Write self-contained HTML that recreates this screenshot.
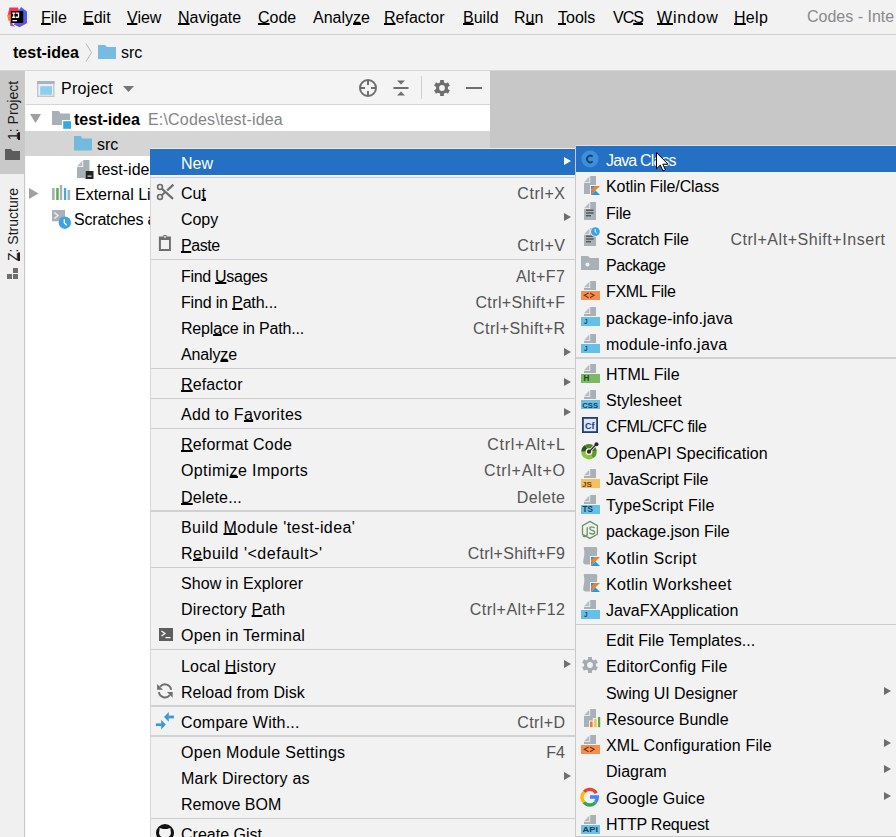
<!DOCTYPE html>
<html><head><meta charset="utf-8">
<style>
*{margin:0;padding:0;box-sizing:border-box}
html,body{width:896px;height:837px;overflow:hidden;background:#f2f2f2;font-family:"Liberation Sans",sans-serif;font-size:16px;color:#000}
.a{position:absolute;white-space:nowrap;line-height:18px}
svg.a{overflow:visible}
.t{position:absolute;white-space:nowrap;height:26px;line-height:26px}
u{text-decoration:underline;text-decoration-thickness:1.6px;text-underline-offset:0.3px;text-decoration-skip-ink:none}
.vt{transform-origin:0 0;transform:rotate(-90deg);font-size:14px;color:#1a1a1a}
.arr{position:absolute;width:0;height:0;border-top:4.7px solid transparent;border-bottom:4.7px solid transparent;border-left:7.4px solid #6e6e6e}
.hl{position:absolute;background:#2470c4}
</style></head><body>
<div class="a" style="left:0;top:34px;width:896px;height:1px;background:#cfcfcf"></div>
<div class="a" style="left:0;top:70px;width:896px;height:1px;background:#d6d6d6"></div>
<div class="a" style="left:0;top:71px;width:25px;height:766px;background:#f0f0f0"></div><div class="a" style="left:25px;top:71px;width:1px;height:766px;background:#f7f7f7"></div>
<div class="a" style="left:24px;top:174px;width:1px;height:663px;background:#c8c8c8"></div>
<div class="a" style="left:26px;top:71px;width:464px;height:766px;background:#fff"></div>
<div class="a" style="left:26px;top:71px;width:464px;height:33px;background:#f4f4f4"></div>
<div class="a" style="left:26px;top:104px;width:464px;height:1px;background:#d6d6d6"></div>
<div class="a" style="left:490px;top:71px;width:406px;height:766px;background:#c7c7c7"></div>
<svg class="a" style="left:6px;top:6px" width="22" height="22" viewBox="0 0 22 22">
<path d="M3.5 1.5H12L13.5 6L6 18L1.5 10Z" fill="#fe2e5c"/>
<path d="M1.5 9L5 8L5 15L2 14.5Z" fill="#f98520"/>
<path d="M15 1L21 5.5V17L13.5 21L8 18.5L12.5 5Z" fill="#4460f0"/>
<path d="M8 18.5L13.5 21L21 17V12Z" fill="#6b4fe6"/>
<path d="M3.5 15L9 20.5L4.5 20Z" fill="#b03fd0"/>
<rect x="4.8" y="5" width="12.4" height="12" fill="#000"/>
<path d="M6.2 6.5H9.4V7.8H8.4V10.6H9.4V11.9H6.2V10.6H7.2V7.8H6.2ZM10 6.5H13.2V10.4Q13.2 11.9 11.6 11.9H10V10.6H11.9V7.8H10Z" fill="#fff"/>
<rect x="6.5" y="14" width="4.5" height="1.3" fill="#fff"/>
</svg><div class="a mb" style="left:41px;top:9px;letter-spacing:0px"><u>F</u>ile</div><div class="a mb" style="left:83px;top:9px;letter-spacing:0px"><u>E</u>dit</div><div class="a mb" style="left:127px;top:9px;letter-spacing:0px"><u>V</u>iew</div><div class="a mb" style="left:178px;top:9px;letter-spacing:0px"><u>N</u>avigate</div><div class="a mb" style="left:258px;top:9px;letter-spacing:0px"><u>C</u>ode</div><div class="a mb" style="left:313px;top:9px;letter-spacing:0px">Analy<u>z</u>e</div><div class="a mb" style="left:384px;top:9px;letter-spacing:0px"><u>R</u>efactor</div><div class="a mb" style="left:463px;top:9px;letter-spacing:0px"><u>B</u>uild</div><div class="a mb" style="left:514px;top:9px;letter-spacing:0px">R<u>u</u>n</div><div class="a mb" style="left:558px;top:9px;letter-spacing:0px"><u>T</u>ools</div><div class="a mb" style="left:613px;top:9px;letter-spacing:-1.0px">VC<u>S</u></div><div class="a mb" style="left:657px;top:9px;letter-spacing:0.8px"><u>W</u>indow</div><div class="a mb" style="left:734px;top:9px;letter-spacing:0.3px"><u>H</u>elp</div><div class="a mb" style="left:807px;top:8px;color:#8a8a8a">Codes - Inte</div><div class="a" style="left:13px;top:44px;font-weight:bold;font-size:16px">test-idea</div><svg class="a" style="left:85px;top:43px" width="8" height="19" viewBox="0 0 8 19"><path d="M1 0.5L6.5 9.5L1 18.5" fill="none" stroke="#b5b5b5" stroke-width="1"/></svg><svg class="a" style="left:98px;top:45px" width="18" height="14" viewBox="0 0 18 14"><path d="M0 0H7L9 2H18V14H0Z" fill="#77bbe3"/></svg><div class="a" style="left:121px;top:44px">src</div><div class="a" style="left:0;top:71px;width:25px;height:103px;background:#c9c9c9"></div><div class="a vt" style="left:3.5px;top:139.5px"><u>1</u>: Project</div><svg class="a" style="left:5px;top:149px" width="15" height="11" viewBox="0 0 15 11"><path d="M0 0H6L7.5 2H15V11H0Z" fill="#5c5c5c"/></svg><div class="a vt" style="left:3.5px;top:260.5px"><u>Z</u>: Structure</div><svg class="a" style="left:6px;top:268px" width="13" height="12" viewBox="0 0 13 12"><rect x="7" y="0" width="5" height="5" fill="#6e6e6e"/><rect x="1" y="6" width="5" height="5" fill="#6e6e6e"/><rect x="7" y="6" width="5" height="5" fill="#6e6e6e"/></svg><svg class="a" style="left:37px;top:80.5px" width="18" height="16" viewBox="0 0 18 16"><rect x="0" y="0" width="17.5" height="16" fill="#c3c6c9"/><rect x="0" y="0" width="17.5" height="3" fill="#aeb3b9"/><rect x="1.4" y="3" width="14.7" height="11.6" fill="#e4f2fb"/><rect x="3.2" y="5.2" width="11.8" height="8.6" fill="#8fcdee"/></svg><div class="a" style="left:61px;top:80px;letter-spacing:0.3px">Project</div><svg class="a" style="left:123px;top:86px" width="11" height="6" viewBox="0 0 11 6"><path d="M0 0H11L5.5 6Z" fill="#757575"/></svg><svg class="a" style="left:358px;top:78px" width="20" height="20" viewBox="0 0 20 20"><circle cx="10" cy="10" r="8" fill="none" stroke="#6e6e6e" stroke-width="2"/><path d="M10 2V7M10 13V18M2 10H7M13 10H18" stroke="#6e6e6e" stroke-width="2"/></svg><svg class="a" style="left:393px;top:80px" width="16" height="16" viewBox="0 0 16 16"><path d="M4 0.5H12L8 4.5Z" fill="#6e6e6e"/><rect x="0.5" y="7" width="15" height="2" fill="#6e6e6e"/><path d="M4 15.5H12L8 11.5Z" fill="#6e6e6e"/></svg><div class="a" style="left:421px;top:76px;width:1px;height:23px;background:#cfcfcf"></div><svg class="a" style="left:434px;top:80px" width="16" height="16" viewBox="0 0 16 16"><g fill="#6e6e6e"><circle cx="8" cy="8" r="6"/><rect x="6.1" y="0" width="3.8" height="16"/><rect x="6.1" y="0" width="3.8" height="16" transform="rotate(60 8 8)"/><rect x="6.1" y="0" width="3.8" height="16" transform="rotate(-60 8 8)"/></g><circle cx="8" cy="8" r="2.9" fill="#f2f2f2"/></svg><div class="a" style="left:466px;top:87px;width:16px;height:2px;background:#6e6e6e"></div><div class="a" style="left:25px;top:131px;width:465px;height:25px;background:#d5d5d5"></div><svg class="a" style="left:30px;top:114px" width="11" height="9" viewBox="0 0 11 9"><path d="M0 0H11L5.5 9Z" fill="#a0a0a0"/></svg><svg class="a" style="left:52px;top:111px" width="20" height="18" viewBox="0 0 20 18"><path d="M0 0H7L8.5 2.5H18V9H10V14H0Z" fill="#a9b1b8"/><rect x="11.2" y="10.2" width="7.8" height="7.6" fill="#36a9e1"/></svg><div class="a" style="left:74px;top:110.5px;font-weight:bold">test-idea</div><div class="a" style="left:148px;top:110.5px;color:#858585;letter-spacing:0.18px">E:\Codes\test-idea</div><svg class="a" style="left:74px;top:136px" width="18" height="15" viewBox="0 0 18 15"><path d="M0 0H7L8 2.5H18V14.5H0Z" fill="#74b9de"/></svg><div class="a" style="left:97px;top:135.5px">src</div><svg class="a" style="left:77px;top:160px" width="17" height="19" viewBox="0 0 17 19"><path d="M6.2 0H12.5V11H8V18H0V7H6.2Z" fill="#a9b1b8"/><path d="M0 6.2L5.4 0.4V6.2Z" fill="#b8bdc2"/><rect x="8.5" y="11" width="8" height="8" fill="#232323"/><rect x="10.5" y="15.5" width="4" height="1.3" fill="#ccc"/></svg><div class="a" style="left:97px;top:160.5px">test-idea.iml</div><svg class="a" style="left:29px;top:188px" width="10" height="11" viewBox="0 0 10 11"><path d="M0 0V11L9.5 5.5Z" fill="#a0a0a0"/></svg><svg class="a" style="left:52px;top:185px" width="19" height="15" viewBox="0 0 19 15"><rect x="0" y="3" width="2.7" height="12" fill="#a9b1b8"/><rect x="4.2" y="3" width="2.5" height="12" fill="#5fac49"/><rect x="7.8" y="0" width="2.4" height="15" fill="#a9b1b8"/><rect x="11.9" y="3" width="2.3" height="12" fill="#45a7df"/><rect x="15.5" y="5" width="2.7" height="10" fill="#a9b1b8"/></svg><div class="a" style="left:75px;top:185.5px">External Libraries</div><svg class="a" style="left:52px;top:210px" width="20" height="19" viewBox="0 0 20 19"><rect x="0" y="0" width="13" height="11.3" fill="#a9b1b8"/><path d="M2.3 2.5L6 5.5L2.3 8.5" fill="none" stroke="#f2f2f2" stroke-width="1.3"/><circle cx="12.8" cy="12.7" r="6.2" fill="#3ea3e0"/><path d="M12.3 9.2V12.8L14.6 15.2" fill="none" stroke="#fff" stroke-width="1.3"/></svg><div class="a" style="left:74px;top:210.5px;letter-spacing:-0.2px">Scratches and Consoles</div>
<div class="a" style="left:150px;top:148px;width:426px;height:700px;background:#f2f2f2;border-left:1px solid #d6d6d6;border-top:1px solid #ececec"></div>
<div class="hl" style="left:150px;top:149px;width:425px;height:26px"></div><div class="t" style="left:181px;top:150.5px;color:#fff">New</div><div class="arr" style="left:564px;top:156.8px;border-left-color:#fff"></div><div class="a" style="left:151px;top:175px;width:424px;height:1px;background:#fafafa"></div><div class="t" style="left:181px;top:180.5px;">Cu<u>t</u></div><div class="t" style="right:331px;top:180.5px;letter-spacing:0.560px;margin-right:-0.560px;color:#555">Ctrl+X</div><div class="t" style="left:181px;top:206.5px;letter-spacing:-0.067px;">Copy</div><div class="arr" style="left:564px;top:212.8px;border-left-color:#6e6e6e"></div><div class="t" style="left:181px;top:232.5px;letter-spacing:-0.450px;"><u>P</u>aste</div><div class="t" style="right:331px;top:232.5px;letter-spacing:0.560px;margin-right:-0.560px;color:#555">Ctrl+V</div><div class="t" style="left:181px;top:263.5px;letter-spacing:-0.300px;">Find <u>U</u>sages</div><div class="t" style="right:331px;top:263.5px;letter-spacing:0.480px;margin-right:-0.480px;color:#555">Alt+F7</div><div class="t" style="left:181px;top:289.5px;letter-spacing:-0.171px;">Find in <u>P</u>ath...</div><div class="t" style="right:331px;top:289.5px;letter-spacing:0.382px;margin-right:-0.382px;color:#555">Ctrl+Shift+F</div><div class="t" style="left:181px;top:315.5px;letter-spacing:-0.188px;">Repl<u>a</u>ce in Path...</div><div class="t" style="right:331px;top:315.5px;letter-spacing:0.436px;margin-right:-0.436px;color:#555">Ctrl+Shift+R</div><div class="t" style="left:181px;top:341.5px;letter-spacing:-0.133px;">Analy<u>z</u>e</div><div class="arr" style="left:564px;top:347.8px;border-left-color:#6e6e6e"></div><div class="t" style="left:181px;top:371.5px;letter-spacing:0.143px;"><u>R</u>efactor</div><div class="arr" style="left:564px;top:377.8px;border-left-color:#6e6e6e"></div><div class="t" style="left:181px;top:401.5px;letter-spacing:0.307px;">Add to F<u>a</u>vorites</div><div class="arr" style="left:564px;top:407.8px;border-left-color:#6e6e6e"></div><div class="t" style="left:181px;top:431.5px;letter-spacing:0.200px;"><u>R</u>eformat Code</div><div class="t" style="right:331px;top:431.5px;letter-spacing:0.733px;margin-right:-0.733px;color:#555">Ctrl+Alt+L</div><div class="t" style="left:181px;top:457.5px;letter-spacing:0.387px;">Optimi<u>z</u>e Imports</div><div class="t" style="right:331px;top:457.5px;letter-spacing:0.711px;margin-right:-0.711px;color:#555">Ctrl+Alt+O</div><div class="t" style="left:181px;top:484.5px;letter-spacing:0.150px;"><u>D</u>elete...</div><div class="t" style="right:331px;top:484.5px;letter-spacing:0.400px;margin-right:-0.400px;color:#555">Delete</div><div class="t" style="left:181px;top:514.5px;letter-spacing:0.409px;">Build <u>M</u>odule 'test-idea'</div><div class="t" style="left:181px;top:540.5px;letter-spacing:0.522px;">R<u>e</u>build '&lt;default&gt;'</div><div class="t" style="right:331px;top:540.5px;letter-spacing:0.250px;margin-right:-0.250px;color:#555">Ctrl+Shift+F9</div><div class="t" style="left:181px;top:570.5px;letter-spacing:0.080px;">Show in Explorer</div><div class="t" style="left:181px;top:596.5px;letter-spacing:0.215px;">Directory <u>P</u>ath</div><div class="t" style="right:331px;top:596.5px;letter-spacing:0.491px;margin-right:-0.491px;color:#555">Ctrl+Alt+F12</div><div class="t" style="left:181px;top:622.5px;letter-spacing:0.213px;">Open in Terminal</div><div class="t" style="left:181px;top:653.5px;letter-spacing:0.183px;">Local <u>H</u>istory</div><div class="arr" style="left:564px;top:659.8px;border-left-color:#6e6e6e"></div><div class="t" style="left:181px;top:679.5px;letter-spacing:0.067px;">Reload from Disk</div><div class="t" style="left:181px;top:709.5px;letter-spacing:0.200px;">Compare With...</div><div class="t" style="right:331px;top:709.5px;letter-spacing:0.400px;margin-right:-0.400px;color:#555">Ctrl+D</div><div class="t" style="left:181px;top:739.5px;letter-spacing:0.305px;">Open Module Settings</div><div class="t" style="right:331px;top:739.5px;color:#555">F4</div><div class="t" style="left:181px;top:765.5px;letter-spacing:0.200px;">Mark Directory as</div><div class="arr" style="left:564px;top:771.8px;border-left-color:#6e6e6e"></div><div class="t" style="left:181px;top:791.5px;letter-spacing:-0.022px;">Remove BOM</div><div class="t" style="left:181px;top:821.5px;">Create Gist...</div><div class="a" style="left:151px;top:177px;width:424px;height:1px;background:#cdcdcd"></div><div class="a" style="left:151px;top:259px;width:424px;height:1px;background:#cdcdcd"></div><div class="a" style="left:151px;top:368px;width:424px;height:1px;background:#cdcdcd"></div><div class="a" style="left:151px;top:398px;width:424px;height:1px;background:#cdcdcd"></div><div class="a" style="left:151px;top:428px;width:424px;height:1px;background:#cdcdcd"></div><div class="a" style="left:151px;top:510px;width:424px;height:2px;background:#d1d1d1"></div><div class="a" style="left:151px;top:567px;width:424px;height:1px;background:#cdcdcd"></div><div class="a" style="left:151px;top:649px;width:424px;height:1px;background:#cdcdcd"></div><div class="a" style="left:151px;top:705px;width:424px;height:2px;background:#d1d1d1"></div><div class="a" style="left:151px;top:735px;width:424px;height:2px;background:#d1d1d1"></div><div class="a" style="left:151px;top:818px;width:424px;height:1px;background:#cdcdcd"></div><svg class="a" style="left:154px;top:180px" width="24" height="24" viewBox="0 0 24 24"><g fill="none" stroke="#6e6e6e"><circle cx="6" cy="6.9" r="2.4" stroke-width="1.7"/><circle cx="6" cy="16.9" r="2.4" stroke-width="1.7"/><path d="M7.7 8.5L19 18.9" stroke-width="2.2"/><path d="M7.8 15.3L11.3 12.1" stroke-width="2"/><path d="M13.1 10.5L19.4 4.6" stroke-width="2.2"/></g></svg><svg class="a" style="left:154px;top:230px" width="24" height="24" viewBox="0 0 24 24"><path d="M4.9 6.4H16.9V21H4.9ZM6.9 9.9V18.9H15V9.9Z" fill="#6e6e6e" fill-rule="evenodd"/><path d="M8.6 6.6Q8.8 5.1 10.4 5.1H11.6Q13.2 5.1 13.4 6.6Z" fill="#6e6e6e"/><circle cx="11" cy="6.9" r="0.9" fill="#f2f2f2"/></svg><svg class="a" style="left:159px;top:628px" width="14" height="13" viewBox="0 0 14 13"><rect width="14" height="13" fill="#5e5e5e"/><path d="M2.5 3L6 5.5L2.5 8" fill="none" stroke="#fff" stroke-width="1.2"/><rect x="6.5" y="9" width="5" height="1.2" fill="#fff"/></svg><svg class="a" style="left:155px;top:681px" width="20" height="20" viewBox="0 0 20 20"><g fill="none" stroke="#6e6e6e" stroke-width="2"><path d="M16.1 8.8A6.2 6.2 0 0 0 5.2 5.6"/><path d="M3.9 11.2A6.2 6.2 0 0 0 14.8 14.2"/></g><g fill="#6e6e6e"><path d="M2.1 2.9V8.8H8Z"/><path d="M17.7 11.1V16.7L11.9 11.1Z"/></g></svg><svg class="a" style="left:155px;top:711px" width="19" height="19" viewBox="0 0 19 19"><g fill="#3a97d8"><path d="M9 6L13.8 0.9V10.8Z"/><rect x="13.6" y="4.6" width="5.3" height="2.8"/><path d="M10.8 13.6L6.2 9V18.6Z"/><rect x="0.9" y="12.4" width="5.5" height="2.7"/></g></svg><svg class="a" style="left:156px;top:824px" width="18" height="18" viewBox="0 0 18 18"><circle cx="9" cy="9" r="9" fill="#111"/><path d="M3.4 6.8L3.6 3.9Q5.6 4.3 6.9 5.1H11.1Q12.4 4.3 14.4 3.9L14.6 6.8Q15.2 8.2 14.8 10Q14 13.6 9 13.6Q4 13.6 3.2 10Q2.8 8.2 3.4 6.8Z" fill="#f2f2f2"/><rect x="7.3" y="13" width="3.4" height="5" fill="#111"/></svg>
<div class="a" style="left:575px;top:145px;width:321px;height:692px;background:#f2f2f2;border-left:1px solid #c9c9c9;border-top:1px solid #e0e0e0;border-bottom:1px solid #c9c9c9"></div>
<div class="hl" style="left:576px;top:146px;width:320px;height:26px"></div><div class="t" style="left:606px;top:147.5px;color:#fff;letter-spacing:-0.85px">Java Class</div><svg class="a" style="left:581px;top:150px" width="18" height="18" viewBox="0 0 18 18"><circle cx="9" cy="9" r="8.5" fill="#3d90d8"/><path d="M11.6 6.6A3.3 3.3 0 1 0 11.6 11.4" fill="none" stroke="#15406f" stroke-width="1.8"/></svg><div class="t" style="left:606px;top:173.5px;letter-spacing:-0.088px;">Kotlin File/Class</div><div class="t" style="left:606px;top:200.5px;letter-spacing:-0.200px;">File</div><div class="t" style="left:606px;top:226.5px;letter-spacing:-0.145px;">Scratch File</div><div class="t" style="right:11px;top:226.5px;letter-spacing:0.550px;margin-right:-0.550px;color:#555">Ctrl+Alt+Shift+Insert</div><div class="t" style="left:606px;top:252.5px;letter-spacing:-0.400px;">Package</div><div class="t" style="left:606px;top:278.5px;letter-spacing:-0.300px;">FXML File</div><div class="t" style="left:606px;top:305.5px;letter-spacing:0.075px;">package-info.java</div><div class="t" style="left:606px;top:331.5px;letter-spacing:0.253px;">module-info.java</div><div class="t" style="left:606px;top:361.5px;letter-spacing:0.050px;">HTML File</div><div class="t" style="left:606px;top:387.5px;letter-spacing:0.111px;">Stylesheet</div><div class="t" style="left:606px;top:413.5px;letter-spacing:-0.417px;">CFML/CFC file</div><div class="t" style="left:606px;top:440.5px;letter-spacing:0.080px;">OpenAPI Specification</div><div class="t" style="left:606px;top:466.5px;letter-spacing:-0.186px;">JavaScript File</div><div class="t" style="left:606px;top:492.5px;letter-spacing:0.186px;">TypeScript File</div><div class="t" style="left:606px;top:518.5px;letter-spacing:-0.062px;">package.json File</div><div class="t" style="left:606px;top:545.5px;letter-spacing:0.417px;">Kotlin Script</div><div class="t" style="left:606px;top:571.5px;letter-spacing:0.320px;">Kotlin Worksheet</div><div class="t" style="left:606px;top:597.5px;letter-spacing:-0.012px;">JavaFXApplication</div><div class="t" style="left:606px;top:627.5px;letter-spacing:0.048px;">Edit File Templates...</div><div class="t" style="left:606px;top:653.5px;letter-spacing:0.200px;">EditorConfig File</div><div class="t" style="left:606px;top:680.5px;letter-spacing:-0.050px;">Swing UI Designer</div><div class="arr" style="left:884px;top:686.8px;border-left-color:#6e6e6e"></div><div class="t" style="left:606px;top:706.5px;letter-spacing:-0.014px;">Resource Bundle</div><div class="t" style="left:606px;top:732.5px;letter-spacing:0.171px;">XML Configuration File</div><div class="arr" style="left:884px;top:738.8px;border-left-color:#6e6e6e"></div><div class="t" style="left:606px;top:758.5px;letter-spacing:0.033px;">Diagram</div><div class="arr" style="left:884px;top:764.8px;border-left-color:#6e6e6e"></div><div class="t" style="left:606px;top:785.5px;letter-spacing:0.091px;">Google Guice</div><div class="arr" style="left:884px;top:791.8px;border-left-color:#6e6e6e"></div><div class="t" style="left:606px;top:811.5px;letter-spacing:-0.218px;">HTTP Request</div><div class="a" style="left:576px;top:357px;width:320px;height:2px;background:#d1d1d1"></div><div class="a" style="left:576px;top:624px;width:320px;height:1px;background:#cdcdcd"></div><svg class="a" style="left:584px;top:176px" width="12" height="18" viewBox="0 0 12 18"><path d="M6.2 0H12V18H0V7H6.2Z" fill="#a9b1b8"/><path d="M0 6.2L5.4 0.4V6.2Z" fill="#b8bdc2"/></svg><svg class="a" style="left:590px;top:185px" width="11" height="11" viewBox="0 0 11 11"><rect x="0" y="0" width="11" height="11" fill="#f2f2f2"/><g transform="translate(1 1)"><path d="M0 0H9L0 9Z" fill="#e9862a"/><path d="M0 0H3.4L0 3.6Z" fill="#2d8fe0"/><path d="M0 9L4.5 4.5L9 9Z" fill="#1f9ae8"/><path d="M0 9V5.5L2 4Z" fill="#d0607a"/></g></svg><svg class="a" style="left:584px;top:202px" width="12" height="18" viewBox="0 0 12 18"><path d="M6.2 0H12V18H0V7H6.2Z" fill="#a9b1b8"/><path d="M0 6.2L5.4 0.4V6.2Z" fill="#b8bdc2"/><rect x="2" y="7.5" width="7.6" height="1.4" fill="#555"/><rect x="2" y="10.3" width="7.6" height="1.4" fill="#555"/><rect x="2" y="13" width="5" height="1.4" fill="#555"/></svg><svg class="a" style="left:584px;top:228px" width="12" height="18" viewBox="0 0 12 18"><path d="M6.2 0H12V18H0V7H6.2Z" fill="#a9b1b8"/><path d="M0 6.2L5.4 0.4V6.2Z" fill="#b8bdc2"/><rect x="2" y="7.5" width="7.6" height="1.4" fill="#555"/><rect x="2" y="10.3" width="7.6" height="1.4" fill="#555"/><rect x="2" y="13" width="5" height="1.4" fill="#555"/></svg><svg class="a" style="left:590px;top:226px" width="11" height="11" viewBox="0 0 11 11"><circle cx="5.4" cy="5.6" r="5.2" fill="#f2f2f2"/><circle cx="5.4" cy="5.6" r="4.4" fill="#3ea3e0"/><path d="M5.2 3.2V5.8L6.8 7.3" fill="none" stroke="#fff" stroke-width="1"/></svg><svg class="a" style="left:581px;top:256px" width="18" height="14" viewBox="0 0 18 14"><path d="M0 0H7L9 2H18V14H0Z" fill="#a9b1b8"/><circle cx="6.5" cy="8.5" r="2" fill="#f2f2f2"/></svg><svg class="a" style="left:584px;top:281px" width="12" height="9" viewBox="0 0 12 9"><path d="M6.2 0H12V9H0V7H6.2Z" fill="#a9b1b8"/><path d="M0 6.2L5.4 0.4V6.2Z" fill="#b8bdc2"/></svg><svg class="a" style="left:581px;top:291px" width="19" height="9" viewBox="0 0 19 9"><rect width="19" height="9" fill="#f58d4f"/><path d="M7.6 1.9L3.3 4.35L7.6 6.8M9 1.9L13.1 4.35L9 6.8" fill="none" stroke="#73380f" stroke-width="1.15"/></svg><svg class="a" style="left:584px;top:307px" width="12" height="9" viewBox="0 0 12 9"><path d="M6.2 0H12V9H0V7H6.2Z" fill="#a9b1b8"/><path d="M0 6.2L5.4 0.4V6.2Z" fill="#b8bdc2"/></svg><svg class="a" style="left:581px;top:317px" width="19" height="9" viewBox="0 0 19 9"><rect width="19" height="9" fill="#66bfe8"/><text x="2.9" y="7.4" font-family="Liberation Sans" font-weight="bold" font-size="7.2" fill="#1d3f66" textLength="3.6" lengthAdjust="spacingAndGlyphs">J</text></svg><svg class="a" style="left:584px;top:334px" width="12" height="9" viewBox="0 0 12 9"><path d="M6.2 0H12V9H0V7H6.2Z" fill="#a9b1b8"/><path d="M0 6.2L5.4 0.4V6.2Z" fill="#b8bdc2"/></svg><svg class="a" style="left:581px;top:344px" width="19" height="9" viewBox="0 0 19 9"><rect width="19" height="9" fill="#66bfe8"/><text x="2.9" y="7.4" font-family="Liberation Sans" font-weight="bold" font-size="7.2" fill="#1d3f66" textLength="3.6" lengthAdjust="spacingAndGlyphs">J</text></svg><svg class="a" style="left:584px;top:364px" width="12" height="9" viewBox="0 0 12 9"><path d="M6.2 0H12V9H0V7H6.2Z" fill="#a9b1b8"/><path d="M0 6.2L5.4 0.4V6.2Z" fill="#b8bdc2"/></svg><svg class="a" style="left:581px;top:374px" width="19" height="9" viewBox="0 0 19 9"><rect width="19" height="9" fill="#79b865"/><text x="2.5" y="7.3" font-family="Liberation Sans" font-weight="bold" font-size="8.5" fill="#1b4715" textLength="5.8" lengthAdjust="spacingAndGlyphs">H</text></svg><svg class="a" style="left:584px;top:390px" width="12" height="9" viewBox="0 0 12 9"><path d="M6.2 0H12V9H0V7H6.2Z" fill="#a9b1b8"/><path d="M0 6.2L5.4 0.4V6.2Z" fill="#b8bdc2"/></svg><svg class="a" style="left:581px;top:400px" width="19" height="9" viewBox="0 0 19 9"><rect width="19" height="9" fill="#6cc0e8"/><text x="1.2" y="7.5" font-family="Liberation Sans" font-weight="bold" font-size="8.1" fill="#153d5e" textLength="16" lengthAdjust="spacingAndGlyphs">CSS</text></svg><svg class="a" style="left:582px;top:417px" width="16" height="16" viewBox="0 0 16 16"><rect x="0.9" y="0.9" width="14.2" height="14.2" fill="#d9e6fb" stroke="#233f6b" stroke-width="1.8"/><text x="3" y="12" font-family="Liberation Sans" font-weight="bold" font-size="9" fill="#233f6b">Cf</text></svg><svg class="a" style="left:579px;top:442px" width="20" height="20" viewBox="0 0 20 20"><path d="M10 9.7L2.30 9.70A7.7 7.7 0 0 1 6.15 3.03Z" fill="#2e5415"/><path d="M10 9.7L6.15 3.03A7.7 7.7 0 0 1 13.85 3.03Z" fill="#4f8226"/><path d="M10 9.7L13.85 3.03A7.7 7.7 0 0 1 17.70 9.70Z" fill="#44751d"/><path d="M10 9.7L17.70 9.70A7.7 7.7 0 0 1 13.85 16.37Z" fill="#5f9a2a"/><path d="M10 9.7L13.85 16.37A7.7 7.7 0 0 1 6.15 16.37Z" fill="#84c62c"/><path d="M10 9.7L6.15 16.37A7.7 7.7 0 0 1 2.30 9.70Z" fill="#8cc640"/><circle cx="10" cy="9.7" r="3.4" fill="#f2f2f2"/><path d="M10 9.7L17.5 2.3" stroke="#f2f2f2" stroke-width="2.6"/><path d="M10 9.7L17.5 2.3" stroke="#2a2a2a" stroke-width="1.2"/><circle cx="10" cy="9.7" r="2.1" fill="#2a2a2a"/><circle cx="17.5" cy="2.3" r="2" fill="#2a2a2a"/></svg><svg class="a" style="left:584px;top:469px" width="12" height="9" viewBox="0 0 12 9"><path d="M6.2 0H12V9H0V7H6.2Z" fill="#a9b1b8"/><path d="M0 6.2L5.4 0.4V6.2Z" fill="#b8bdc2"/></svg><svg class="a" style="left:581px;top:479px" width="19" height="9" viewBox="0 0 19 9"><rect width="19" height="9" fill="#f5c065"/><text x="0.9" y="7.5" font-family="Liberation Sans" font-weight="bold" font-size="8.1" fill="#6b4312" textLength="9.9" lengthAdjust="spacingAndGlyphs">JS</text></svg><svg class="a" style="left:584px;top:495px" width="12" height="9" viewBox="0 0 12 9"><path d="M6.2 0H12V9H0V7H6.2Z" fill="#a9b1b8"/><path d="M0 6.2L5.4 0.4V6.2Z" fill="#b8bdc2"/></svg><svg class="a" style="left:581px;top:505px" width="19" height="9" viewBox="0 0 19 9"><rect width="19" height="9" fill="#66bfe8"/><text x="1.6" y="7.4" font-family="Liberation Sans" font-weight="bold" font-size="8.5" fill="#153d5e" textLength="10.4" lengthAdjust="spacingAndGlyphs">TS</text></svg><svg class="a" style="left:580px;top:520px" width="20" height="20" viewBox="0 0 20 20"><g fill="none" stroke="#6a8f68" stroke-width="1.3"><path d="M9.9 1.4L17.4 5.6V14.2L9.9 18.4L2.5 14.2V5.6Z"/><path d="M7.2 7.2V14.3Q7.2 16.6 5 16.6Q3.4 16.6 2.8 15.4"/><path d="M14.6 8.2Q13.6 6.9 11.8 6.9Q9.8 6.9 9.8 8.6Q9.8 10 12 10.3Q14.7 10.7 14.7 12.3Q14.7 14 12.2 14Q10.1 14 9.4 12.6"/></g></svg><svg class="a" style="left:583px;top:547px" width="15" height="18" viewBox="0 0 15 18"><path d="M1.5 0H13Q14.6 0 14.3 2.5Q14 5 14 7.5V17.6H3Q-0.3 17.6 0.2 14Q0.9 10.5 1.3 7.5Q1.6 4 0.8 1.5Q0.5 0 1.5 0Z" fill="#a9b1b8"/></svg><svg class="a" style="left:590px;top:555.5px" width="11" height="11" viewBox="0 0 11 11"><rect x="0" y="0" width="11" height="11" fill="#f2f2f2"/><g transform="translate(1 1)"><path d="M0 0H9L0 9Z" fill="#e9862a"/><path d="M0 0H3.4L0 3.6Z" fill="#2d8fe0"/><path d="M0 9L4.5 4.5L9 9Z" fill="#1f9ae8"/><path d="M0 9V5.5L2 4Z" fill="#d0607a"/></g></svg><svg class="a" style="left:583px;top:573.5px" width="15" height="18" viewBox="0 0 15 18"><path d="M1.5 0H13Q14.6 0 14.3 2.5Q14 5 14 7.5V17.6H3Q-0.3 17.6 0.2 14Q0.9 10.5 1.3 7.5Q1.6 4 0.8 1.5Q0.5 0 1.5 0Z" fill="#a9b1b8"/></svg><svg class="a" style="left:590px;top:582.0px" width="11" height="11" viewBox="0 0 11 11"><rect x="0" y="0" width="11" height="11" fill="#f2f2f2"/><g transform="translate(1 1)"><path d="M0 0H9L0 9Z" fill="#e9862a"/><path d="M0 0H3.4L0 3.6Z" fill="#2d8fe0"/><path d="M0 9L4.5 4.5L9 9Z" fill="#1f9ae8"/><path d="M0 9V5.5L2 4Z" fill="#d0607a"/></g></svg><svg class="a" style="left:584px;top:600px" width="12" height="9" viewBox="0 0 12 9"><path d="M6.2 0H12V9H0V7H6.2Z" fill="#a9b1b8"/><path d="M0 6.2L5.4 0.4V6.2Z" fill="#b8bdc2"/></svg><svg class="a" style="left:581px;top:610px" width="19" height="9" viewBox="0 0 19 9"><rect width="19" height="9" fill="#66bfe8"/><text x="2.9" y="7.4" font-family="Liberation Sans" font-weight="bold" font-size="7.2" fill="#1d3f66" textLength="3.6" lengthAdjust="spacingAndGlyphs">J</text></svg><svg class="a" style="left:582px;top:657px" width="16" height="16" viewBox="0 0 16 16"><g fill="#a4abb3"><circle cx="8" cy="8" r="6"/><rect x="6.1" y="0" width="3.8" height="16"/><rect x="6.1" y="0" width="3.8" height="16" transform="rotate(60 8 8)"/><rect x="6.1" y="0" width="3.8" height="16" transform="rotate(-60 8 8)"/></g><circle cx="8" cy="8" r="2.9" fill="#f2f2f2"/></svg><svg class="a" style="left:584px;top:709px" width="17" height="19" viewBox="0 0 17 19"><path d="M6.2 0H12V18H0V7H6.2Z" fill="#a9b1b8"/><path d="M0 6.2L5.4 0.4V6.2Z" fill="#b8bdc2"/><path d="M5 18.5V11.5H8.8V9H12.8V7H17V18.5Z" fill="#f2f2f2"/><rect x="6" y="12.5" width="2.6" height="5.7" fill="#f07a22"/><rect x="10.2" y="9.8" width="2.5" height="8.4" fill="#f4c04a"/><rect x="14" y="8" width="2.2" height="10.2" fill="#5aa84a"/></svg><svg class="a" style="left:584px;top:735px" width="12" height="9" viewBox="0 0 12 9"><path d="M6.2 0H12V9H0V7H6.2Z" fill="#a9b1b8"/><path d="M0 6.2L5.4 0.4V6.2Z" fill="#b8bdc2"/></svg><svg class="a" style="left:581px;top:745px" width="19" height="9" viewBox="0 0 19 9"><rect width="19" height="9" fill="#f58d4f"/><path d="M7.6 1.9L3.3 4.35L7.6 6.8M9 1.9L13.1 4.35L9 6.8" fill="none" stroke="#73380f" stroke-width="1.15"/></svg><svg class="a" style="left:581px;top:788px" width="18" height="18" viewBox="0 0 18 18"><g fill="none" stroke-width="3.4"><path d="M15.2 5.2A7.3 7.3 0 0 0 3.2 4" stroke="#ea4335"/><path d="M3.2 4A7.3 7.3 0 0 0 3 14.3" stroke="#fbbc05"/><path d="M3 14.3A7.3 7.3 0 0 0 14.5 14.2" stroke="#34a853"/><path d="M14.5 14.2A7.3 7.3 0 0 0 16.3 9H9" stroke="#4285f4"/></g></svg><svg class="a" style="left:584px;top:814.5px" width="12" height="9" viewBox="0 0 12 9"><path d="M6.2 0H12V9H0V7H6.2Z" fill="#a9b1b8"/><path d="M0 6.2L5.4 0.4V6.2Z" fill="#b8bdc2"/></svg><svg class="a" style="left:581px;top:824.5px" width="19" height="9" viewBox="0 0 19 9"><rect width="19" height="9" fill="#6cc0e8"/><text x="1.6" y="6.9" font-family="Liberation Sans" font-weight="bold" font-size="7.7" fill="#153d5e" textLength="15.4" lengthAdjust="spacingAndGlyphs">API</text></svg><svg class="a" style="left:656px;top:152px" width="13" height="20" viewBox="0 0 13 20"><path d="M0.5 0.5V16.8L4.3 13.1L7 19L9.4 17.9L6.8 12.2H12Z" fill="#fff" stroke="#000" stroke-width="1"/></svg>
</body></html>
